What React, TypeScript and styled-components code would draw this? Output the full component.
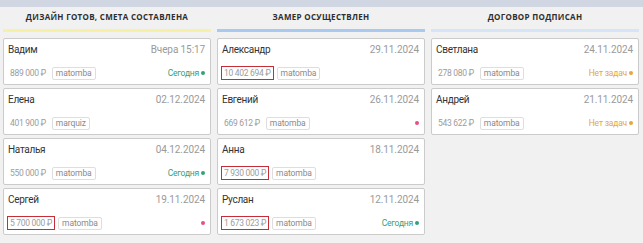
import React from 'react'
import styled, { createGlobalStyle } from 'styled-components'

const GlobalStyle = createGlobalStyle`
  html, body {
    margin: 0;
    padding: 0;
    background: #f1f1f1;
  }
  body {
    font-family: "Roboto", "Liberation Sans", sans-serif;
    color: #333;
  }
`

type Status = 'today' | 'empty' | 'dot'

type Deal = {
  name: string
  date: string
  price: string
  tag: string
  flagged?: boolean
  status?: Status
}

type Column = {
  title: string
  line: string
  deals: Deal[]
}

const columns: Column[] = [
  {
    title: 'Дизайн готов, смета составлена',
    line: '#f6f1a6',
    deals: [
      { name: 'Вадим', date: 'Вчера 15:17', price: '889 000 ₽', tag: 'matomba', status: 'today' },
      { name: 'Елена', date: '02.12.2024', price: '401 900 ₽', tag: 'marquiz' },
      { name: 'Наталья', date: '04.12.2024', price: '550 000 ₽', tag: 'matomba', status: 'today' },
      { name: 'Сергей', date: '19.11.2024', price: '5 700 000 ₽', tag: 'matomba', flagged: true, status: 'dot' },
    ],
  },
  {
    title: 'Замер осуществлен',
    line: '#a9c9ee',
    deals: [
      { name: 'Александр', date: '29.11.2024', price: '10 402 694 ₽', tag: 'matomba', flagged: true },
      { name: 'Евгений', date: '26.11.2024', price: '669 612 ₽', tag: 'matomba', status: 'dot' },
      { name: 'Анна', date: '18.11.2024', price: '7 930 000 ₽', tag: 'matomba', flagged: true },
      { name: 'Руслан', date: '12.11.2024', price: '1 673 023 ₽', tag: 'matomba', flagged: true, status: 'today' },
    ],
  },
  {
    title: 'Договор подписан',
    line: '#d6e5f6',
    deals: [
      { name: 'Светлана', date: '24.11.2024', price: '278 080 ₽', tag: 'matomba', status: 'empty' },
      { name: 'Андрей', date: '21.11.2024', price: '543 622 ₽', tag: 'matomba', status: 'empty' },
    ],
  },
]

export default function App() {
  return (
    <>
      <GlobalStyle />
      <TopStrip />
      <Board>
        {columns.map((col) => (
          <Col key={col.title}>
            <ColHeader>{col.title}</ColHeader>
            <ColLine color={col.line} />
            <CardList>
              {col.deals.map((d) => (
                <Card key={d.name}>
                  <CardRow>
                    <Name>{d.name}</Name>
                    <DateText>{d.date}</DateText>
                  </CardRow>
                  <CardRow>
                    <Meta>
                      <Price $flagged={d.flagged}>{d.price}</Price>
                      <Tag>{d.tag}</Tag>
                    </Meta>
                    {d.status === 'today' && (
                      <StatusText $color="#35a176">
                        Сегодня <Dot $color="#35a176" />
                      </StatusText>
                    )}
                    {d.status === 'empty' && (
                      <StatusText $color="#e6a73c">
                        Нет задач <Dot $color="#e6a73c" />
                      </StatusText>
                    )}
                    {d.status === 'dot' && (
                      <StatusText $color="#e74f86">
                        <Dot $color="#e74f86" />
                      </StatusText>
                    )}
                  </CardRow>
                </Card>
              ))}
            </CardList>
          </Col>
        ))}
      </Board>
    </>
  )
}

const TopStrip = styled.div`
  height: 7px;
  background: #d0d7e2;
`

const Board = styled.div`
  display: grid;
  grid-template-columns: repeat(3, 208px);
  column-gap: 6px;
  padding: 0 4px 0 3px;
`

const Col = styled.div`
  display: flex;
  flex-direction: column;
`

const ColHeader = styled.div`
  height: 22px;
  padding-bottom: 4px;
  box-sizing: border-box;
  display: flex;
  align-items: center;
  justify-content: center;
  font-family: "Open Sans", sans-serif;
  font-weight: 700;
  font-size: 8px;
  letter-spacing: 0.3px;
  text-transform: uppercase;
  color: #2f2f2f;
`

const ColLine = styled.div<{ color: string }>`
  height: 3px;
  background: ${(p) => p.color};
`

const CardList = styled.div`
  display: flex;
  flex-direction: column;
  gap: 3px;
  margin-top: 6px;
`

const Card = styled.div`
  height: 47px;
  box-sizing: border-box;
  background: #fff;
  border: 1px solid #cbcbcb;
  border-radius: 2px;
  padding: 5px 5px 4px 4px;
  display: flex;
  flex-direction: column;
  justify-content: space-between;
`

const CardRow = styled.div`
  display: flex;
  align-items: center;
  justify-content: space-between;
`

const Name = styled.span`
  font-size: 10px;
  letter-spacing: -0.3px;
  color: #333;
`

const DateText = styled.span`
  font-size: 10px;
  letter-spacing: -0.1px;
  color: #9a9a9a;
`

const Meta = styled.div`
  display: flex;
  align-items: center;
  gap: 3px;
`

const Price = styled.span<{ $flagged?: boolean }>`
  font-size: 8.5px;
  letter-spacing: -0.3px;
  color: #9c9c9c;
  padding: 1px 2px;
  margin-left: -1px;
  border: 1px solid ${(p) => (p.$flagged ? '#c62d37' : 'transparent')};
`

const Tag = styled.span`
  font-size: 8.5px;
  letter-spacing: -0.1px;
  color: #8a8a8a;
  border: 1px solid #dedede;
  border-radius: 2px;
  padding: 0 3px;
  line-height: 11px;
`

const StatusText = styled.span<{ $color: string }>`
  display: flex;
  align-items: center;
  gap: 2px;
  font-size: 8.5px;
  letter-spacing: -0.2px;
  color: ${(p) => p.$color};
`

const Dot = styled.span<{ $color: string }>`
  width: 4px;
  height: 4px;
  border-radius: 50%;
  background: ${(p) => p.$color};
`
